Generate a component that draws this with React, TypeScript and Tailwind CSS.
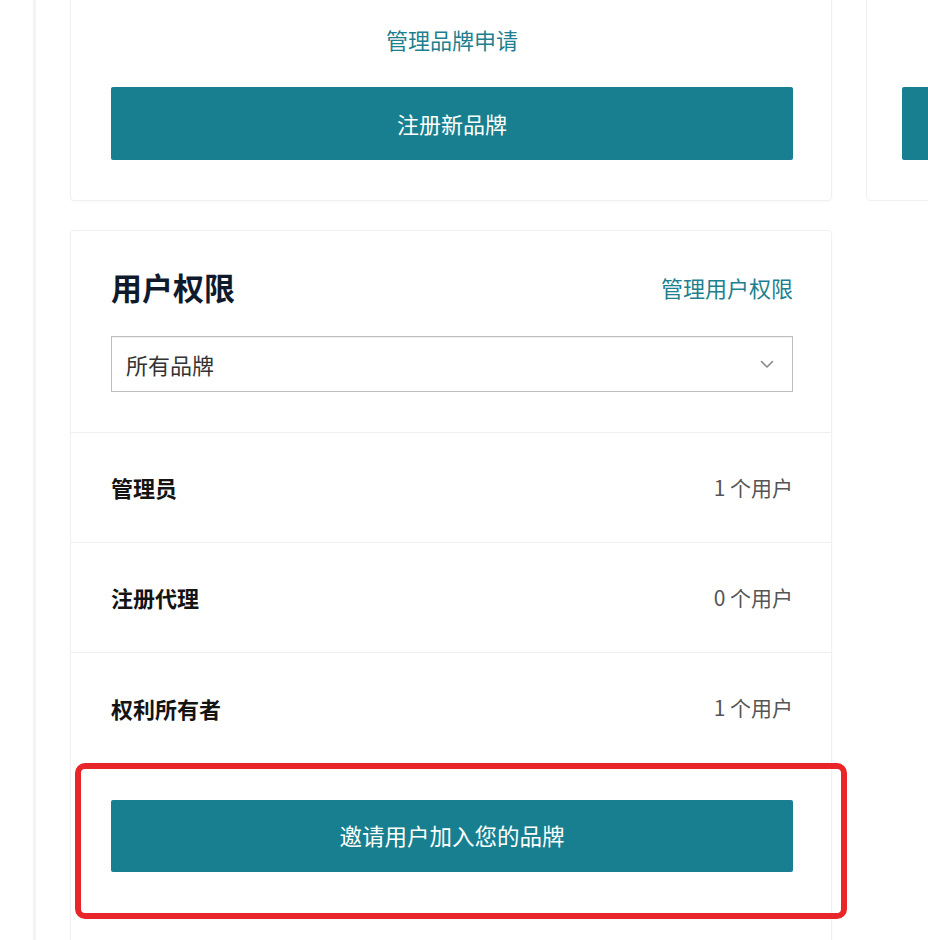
import React from "react";

const font = { fontFamily: '"Noto Sans CJK SC", "Noto Sans", sans-serif' };

function Chevron() {
  return (
    <svg width="14" height="9" viewBox="0 0 14 9" fill="none">
      <path d="M1.5 1.5 L7 7 L12.5 1.5" stroke="#8a8a8a" strokeWidth="1.6" strokeLinecap="round" strokeLinejoin="round" />
    </svg>
  );
}

function Row({ label, value, last }: { label: string; value: string; last?: boolean }) {
  return (
    <div
      className={
        last
          ? "flex h-[110px] items-center justify-between pl-10 pr-[38px]"
          : "flex h-[110px] items-center justify-between border-b border-[#efefef] pl-10 pr-[38px]"
      }
    >
      <span className="text-[22px] font-bold text-[#141414]">{label}</span>
      <span className="text-[21px] text-[#555555]">{value}</span>
    </div>
  );
}

export default function App() {
  return (
    <div className="flex h-[940px] w-[928px] overflow-hidden bg-white" style={font}>
      <div className="w-[33px] shrink-0" />
      <div className="w-[3px] shrink-0 bg-[#f4f4f4]" />
      <div className="flex shrink-0 gap-[34px] pl-[34px]">
        <div className="flex w-[762px] shrink-0 flex-col gap-[29px]">
          <div className="-mt-[20px] flex flex-col rounded-[4px] border border-[#f0f0f0] pb-[40px] pl-10 pr-[38px] pt-[39px] shadow-[0_1px_2px_rgba(0,0,0,0.03)]">
            <div className="flex h-[38px] items-center justify-center text-[22px] text-[#1d7f8f]">管理品牌申请</div>
            <div className="mt-[29px] flex h-[73px] items-center justify-center rounded-[2px] bg-[#177f8f] text-[22px] text-white">
              注册新品牌
            </div>
          </div>
          <div className="flex flex-col rounded-[4px] border border-[#f0f0f0] shadow-[0_1px_2px_rgba(0,0,0,0.03)]">
            <div className="flex flex-col pb-[40px] pl-10 pr-[38px] pt-[38px]">
              <div className="flex h-[36px] items-center justify-between">
                <span className="text-[31px] font-bold text-[#0f1b2c]">用户权限</span>
                <span className="text-[22px] text-[#1d7f8f]">管理用户权限</span>
              </div>
              <div className="mt-[31px] flex h-[56px] items-center justify-between border border-[#bdbdbd] pl-[14px] pr-[18px] shadow-[inset_0_1px_1px_rgba(0,0,0,0.06)]">
                <span className="text-[22px] text-[#333333]">所有品牌</span>
                <Chevron />
              </div>
            </div>
            <div className="border-t border-[#efefef]">
              <Row label="管理员" value="1 个用户" />
              <Row label="注册代理" value="0 个用户" />
              <Row label="权利所有者" value="1 个用户" last />
            </div>
            <div className="relative pb-[100px] pl-10 pr-[38px] pt-[37px]">
              <div className="flex h-[72px] items-center justify-center rounded-[2px] bg-[#177f8f] text-[22.5px] text-white">
                邀请用户加入您的品牌
              </div>
              <div className="pointer-events-none absolute left-[4px] right-[-16px] top-0 h-[156px] rounded-[10px] border-[6px] border-[#e8262a]" />
            </div>
          </div>
        </div>
        <div className="flex w-[200px] shrink-0 flex-col">
          <div className="-mt-[20px] flex flex-col rounded-[4px] border border-[#f0f0f0] pb-[40px] pl-[35px] pt-[106px]">
            <div className="h-[73px] rounded-[2px] bg-[#177f8f]" />
          </div>
        </div>
      </div>
    </div>
  );
}
